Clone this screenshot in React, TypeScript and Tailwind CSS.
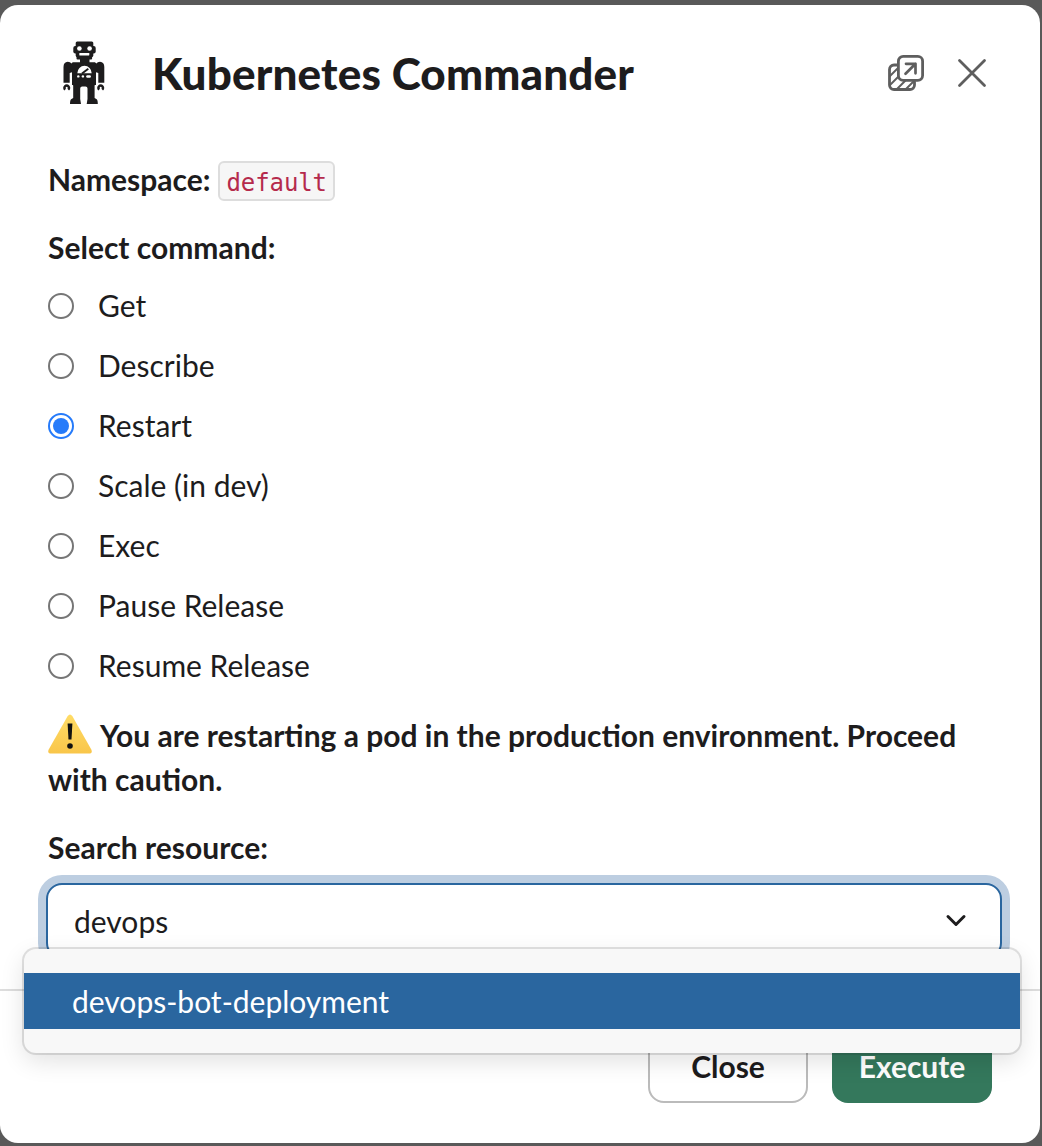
import { useState } from "react";

const commands = ["Get", "Describe", "Restart", "Scale (in dev)", "Exec", "Pause Release", "Resume Release"];

function RobotIcon() {
  return (
    <svg className="size-[72px] shrink-0" viewBox="0 0 72 72" fill="#1d1c1d">
      <rect x="27.700" y="4.500" width="17.600" height="15.500" rx="1.500" />
      <rect x="25.300" y="9" width="22.400" height="7.500" rx="2" />
      <rect x="28.500" y="18" width="15.600" height="4.500" rx="1" />
      <rect x="32" y="21" width="9.500" height="5" />
      <path d="M24.700 25.300H47l1.300 1.200q1.200-1.700 3.700-1.700 4.300.2 4.300 5.200v15.700h-6V36L48 35.300V48H24V35.300l-2.300.7v9.700h-6.200V30q0-5 4.300-5.200 2.500 0 3.700 1.700z" />
      <path d="M24.700 46h22.600v1.500l-.7 1V61l1.700 1q1.500.5 1.500 5H38.700l.8-5V51.500q0-2-2-2h-3.300q-2 0-2 2V62l.8 5H22q0-4.500 1.500-5l1.700-1V48.500l-.8-1z" />
      <path d="M17.200 52.600a2.300 2.300 0 1 1 3 0M51.200 52.600a2.300 2.300 0 1 1 3 0" fill="none" stroke="#1d1c1d" strokeWidth="2.500" />
      <circle cx="31.400" cy="11.500" r="2.300" fill="#fff" />
      <circle cx="41.600" cy="11.500" r="2.300" fill="#fff" />
      <rect x="31.300" y="16" width="10" height="2.400" rx=".4" fill="#fff" />
      <path d="M29.300 36.300a7.200 7.600 0 0 1 14.400 0z" fill="#fff" />
      <path d="M34 36.500l6.300-4.800" stroke="#1d1c1d" strokeWidth="1.900" />
      <circle cx="30.300" cy="39.400" r="1.200" fill="#fff" />
      <circle cx="34.900" cy="39.400" r="1.200" fill="#fff" />
      <rect x="38.200" y="38.200" width="4.700" height="2.500" rx="1.200" fill="#fff" />
    </svg>
  );
}

function PopOutIcon() {
  return (
    <svg className="size-10" viewBox="0 0 40 40" fill="none" stroke="#5e5e5e" strokeWidth="2.800" strokeLinecap="round" strokeLinejoin="round">
      <path d="M11 12H8a4.500 4.500 0 0 0-4.500 4.500V32A4.500 4.500 0 0 0 8 36.500h16a4.500 4.500 0 0 0 4.500-4.500v-3" />
      <path d="M4 23l8-8M4 32l9-9M11 36l8.500-8.500M20 36l7.500-7.500" strokeWidth="1.900" />
      <rect x="12.400" y="3.400" width="24.200" height="24" rx="4.800" fill="#fff" />
      <path d="M20 10.800h9.500v9.500M29.500 10.800L19.500 20.800" strokeWidth="2.700" />
    </svg>
  );
}

function WarningIcon() {
  return (
    <svg className="mr-2 inline-block h-11 w-11 align-[-9px]" viewBox="0 0 44 44">
      <defs>
        <linearGradient id="warning" x2="0" y2="1">
          <stop stopColor="#ffdc66" />
          <stop offset="1" stopColor="#f9c64a" />
        </linearGradient>
      </defs>
      <path d="M19.700 4q2.300-3 4.600 0l19 33.500q1.600 4-2.300 4H3q-3.900 0-2.300-4z" fill="url(#warning)" />
      <path d="M19.600 11.500h4.800l-.9 16h-3z" fill="#111" />
      <circle cx="22" cy="34" r="2.800" fill="#111" />
    </svg>
  );
}

export default function App() {
  const [selected, setSelected] = useState("Restart");
  return (
    <div className="h-[1146px] w-[1042px] overflow-hidden bg-[#595959] pt-[5px] font-['Lato',sans-serif] text-[30px] leading-[44px] text-[#1d1c1d]">
      <div className="flex h-[1138px] w-[1040px] flex-col rounded-[18px] bg-white">
        <header className="flex h-[141px] shrink-0 items-start pt-[32px] pr-[48px] pl-[48px]">
          <RobotIcon />
          <h1 className="ml-8 pt-[6px] text-[44px] leading-[60px] font-black tracking-[0.16px]">Kubernetes Commander</h1>
          <button aria-label="Open in new window" className="mt-[16px] ml-auto"><PopOutIcon /></button>
          <button aria-label="Close dialog" className="mt-[16px] ml-[26px]">
            <svg className="size-10" viewBox="0 0 40 40" stroke="#5e5e5e" strokeWidth="2.800" strokeLinecap="round">
              <path d="M7.500 7.500l25 25M32.500 7.500l-25 25" />
            </svg>
          </button>
        </header>
        <main className="h-[843px] shrink-0 px-[48px] pt-[11px] font-bold">
          <div className="flex h-11 items-center">
            Namespace:
            <code className="mt-1 ml-2 flex h-10 w-[117px] items-center rounded-[6px] border-2 border-[#dddddd] bg-[#f6f6f6] px-[6px] pt-1 font-['DejaVu_Sans_Mono',monospace] text-[24px] font-normal tracking-[-0.1px] text-[#b52a4c]">default</code>
          </div>
          <h2 className="mt-6">Select command:</h2>
          <div className="mt-[14px] flex flex-col gap-4 font-normal">
            {commands.map((name) => (
              <label key={name} className="flex h-11 items-center gap-6">
                <input
                  type="radio"
                  name="command"
                  checked={selected === name}
                  onChange={() => setSelected(name)}
                  className="mt-[2px] size-[26px] appearance-none rounded-full border-2 border-[#767676] bg-white bg-clip-content p-[3px] checked:border-[#267bfa] checked:bg-[#267bfa]"
                />
                {name}
              </label>
            ))}
          </div>
          <p className="mt-[25px]">
            <WarningIcon />
            You are restarting a pod in the production environment. Proceed with caution.
          </p>
          <h2 className="mt-6">Search resource:</h2>
          <div className="relative mt-[14px] -mr-[10px] -ml-[2px] h-[76px] w-[956px] font-normal">
            <div className="flex h-full items-center justify-between rounded-[16px] border-2 border-[#2a669f] bg-white pr-[32px] pl-[26px] ring-8 ring-[#bdcee1]">
              <span>devops</span>
              <svg className="mb-[2px] h-6 w-6" viewBox="0 0 24 24" fill="none" stroke="#1d1c1d" strokeWidth="3" strokeLinecap="round" strokeLinejoin="round">
                <path d="M4 8.500l8 8 8-8" />
              </svg>
            </div>
            <div className="absolute top-[66px] -left-[22px] z-10 h-[104px] w-[996px] rounded-[12px] bg-[#f8f8f8] py-6 shadow-[0_0_0_2px_rgba(29,28,29,0.13),0_8px_24px_rgba(0,0,0,0.12)]">
              <div className="flex h-14 items-center bg-[#2a669f] px-12 text-white">devops-bot-deployment</div>
            </div>
          </div>
        </main>
        <footer className="flex flex-1 items-start justify-end gap-6 border-t-2 border-[#dddddd] px-12 pt-10 font-bold">
          <button className="h-[72px] w-40 rounded-[16px] border-2 border-[#bbbbbb] pb-[2px]">Close</button>
          <button className="h-[72px] w-40 rounded-[16px] bg-[#34785c] pb-[2px] text-white">Execute</button>
        </footer>
      </div>
    </div>
  );
}
